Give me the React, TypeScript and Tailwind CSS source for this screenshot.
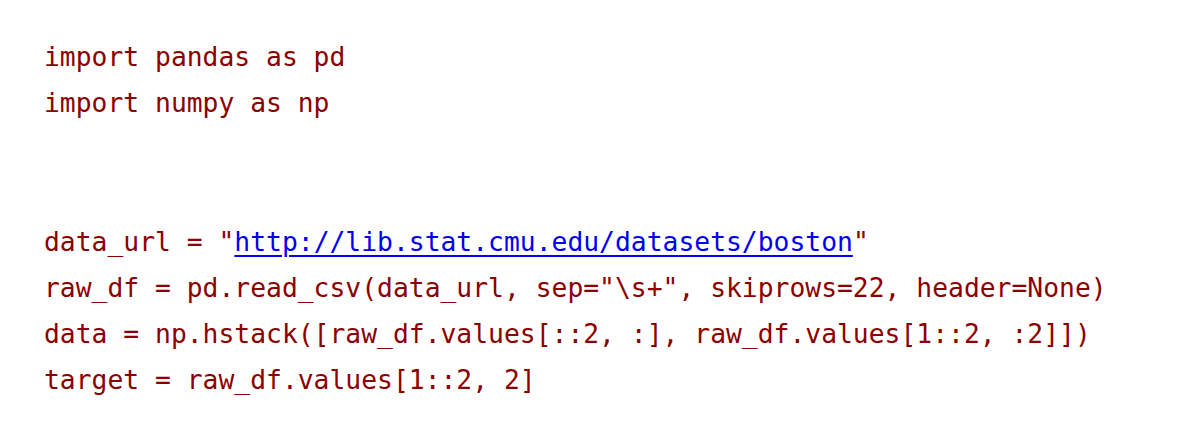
const lines: (string | null)[] = [
  "import pandas as pd",
  "import numpy as np",
  "",
  "",
  null,
  'raw_df = pd.read_csv(data_url, sep="\\s+", skiprows=22, header=None)',
  "data = np.hstack([raw_df.values[::2, :], raw_df.values[1::2, :2]])",
  "target = raw_df.values[1::2, 2]",
]

export default function App() {
  return (
    <div className="w-[1177px] h-[421px] bg-white pl-[44px] pt-[34px] overflow-hidden">
      <pre className="font-['DejaVu_Sans_Mono',monospace] text-[26.35px] leading-[46.2px] text-[#8b0000] whitespace-pre">
        {lines.map((line, i) =>
          line === null ? (
            <div key={i}>
              {'data_url = "'}
              <a href="#" className="text-[#0000ee] underline underline-offset-[4px]">
                http://lib.stat.cmu.edu/datasets/boston
              </a>
              {'"'}
            </div>
          ) : (
            <div key={i}>{line === "" ? "\u00a0" : line}</div>
          )
        )}
      </pre>
    </div>
  )
}
